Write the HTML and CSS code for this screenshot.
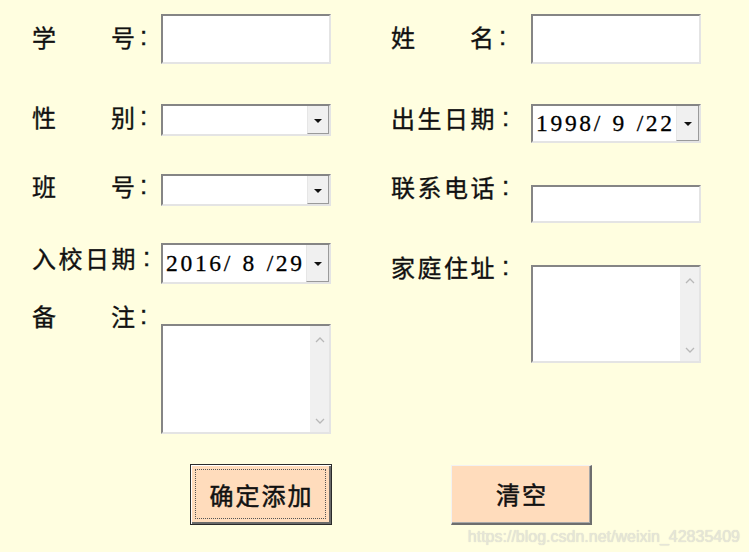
FILE: index.html
```html
<!DOCTYPE html>
<html lang="zh">
<head>
<meta charset="utf-8">
<link rel="stylesheet" href="styles.css">
</head>
<body>
<div class="page">
  <div class="form">
    <div class="col col-left">
      <div class="row r1">
        <div class="lbl"><span class="two"><span>学</span><span>号</span></span><span class="colon">:</span></div>
        <div class="field text h50"></div>
      </div>
      <div class="row r2">
        <div class="lbl"><span class="two"><span>性</span><span>别</span></span><span class="colon">:</span></div>
        <div class="field select h32"><span class="drop"><i class="tri"></i></span></div>
      </div>
      <div class="row r3">
        <div class="lbl"><span class="two"><span>班</span><span>号</span></span><span class="colon">:</span></div>
        <div class="field select h32"><span class="drop"><i class="tri"></i></span></div>
      </div>
      <div class="row r4">
        <div class="lbl"><span class="four">入校日期</span><span class="colon">:</span></div>
        <div class="field select date h41"><span class="val">2016/ 8 /29</span><span class="drop"><i class="tri"></i></span></div>
      </div>
      <div class="row r5">
        <div class="lbl"><span class="two"><span>备</span><span>注</span></span><span class="colon">:</span></div>
        <div class="field area h110">
          <span class="sb">
            <svg width="10" height="6" viewBox="0 0 10 6"><polyline points="1,5 5,1 9,5" fill="none" stroke="#b8b8b8" stroke-width="1.3"/></svg>
            <svg width="10" height="6" viewBox="0 0 10 6"><polyline points="1,1 5,5 9,1" fill="none" stroke="#b8b8b8" stroke-width="1.3"/></svg>
          </span>
        </div>
      </div>
    </div>
    <div class="col col-right">
      <div class="row q1">
        <div class="lbl"><span class="two"><span>姓</span><span>名</span></span><span class="colon">:</span></div>
        <div class="field text h50"></div>
      </div>
      <div class="row q2">
        <div class="lbl"><span class="four">出生日期</span><span class="colon">:</span></div>
        <div class="field select date h39"><span class="val">1998/ 9 /22</span><span class="drop"><i class="tri"></i></span></div>
      </div>
      <div class="row q3">
        <div class="lbl"><span class="four">联系电话</span><span class="colon">:</span></div>
        <div class="field text h38"></div>
      </div>
      <div class="row q4">
        <div class="lbl"><span class="four">家庭住址</span><span class="colon">:</span></div>
        <div class="field area h98">
          <span class="sb">
            <svg width="10" height="6" viewBox="0 0 10 6"><polyline points="1,5 5,1 9,5" fill="none" stroke="#b8b8b8" stroke-width="1.3"/></svg>
            <svg width="10" height="6" viewBox="0 0 10 6"><polyline points="1,1 5,5 9,1" fill="none" stroke="#b8b8b8" stroke-width="1.3"/></svg>
          </span>
        </div>
      </div>
    </div>
  </div>
  <div class="actions">
    <button class="btn btn-default"><span class="focus">确定添加</span></button>
    <button class="btn btn-plain"><span class="txt">清空</span></button>
  </div>
  <div class="watermark">https://blog.csdn.net/weixin_42835409</div>
</div>
</body>
</html>
```
FILE: styles.css
```css
html, body {
  margin: 0;
  padding: 0;
  background: #fffee0;
}
.page {
  position: relative;
  width: 749px;
  height: 552px;
  box-sizing: border-box;
  padding: 14px 0 0 32px;
  font-family: "Noto Sans CJK SC", "Noto Sans", sans-serif;
  color: #111;
}
.form {
  display: flex;
  gap: 60px;
}
.col {
  display: flex;
  flex-direction: column;
}
.row {
  display: flex;
  align-items: flex-start;
}
.col-left .lbl { width: 129px; }
.col-right .lbl { width: 140px; }
.lbl {
  display: flex;
  align-items: center;
  height: 24px;
  font-size: 24px;
  line-height: 24px;
  flex-shrink: 0;
  -webkit-text-stroke: 0.35px #111;
}
.two {
  display: flex;
  justify-content: space-between;
  width: 103px;
}
.four {
  letter-spacing: 2.5px;
  width: 106px;
}
.colon {
  margin-left: 5px;
  font-family: "Liberation Sans", sans-serif;
  font-size: 26px;
  -webkit-text-stroke: 0.4px #111;
  position: relative;
  top: -1px;
}

.field {
  box-sizing: border-box;
  width: 170px;
  background: #fff;
  border-top: 2px solid #858585;
  border-left: 2px solid #858585;
  border-right: 2px solid #e4e4e4;
  border-bottom: 2px solid #e4e4e4;
  position: relative;
  display: flex;
}
.h50 { height: 50px; }
.h32 { height: 32px; }
.h41 { height: 41px; }
.h39 { height: 39px; }
.h38 { height: 38px; }
.h110 { height: 110px; }
.h98 { height: 98px; }

.select { justify-content: flex-end; align-items: stretch; }
.select .drop {
  width: 20px;
  background: #f0f0f0;
  border-left: 1px solid #e6e6e6;
  border-right: 1px solid #9a9a9a;
  border-bottom: 1px solid #9a9a9a;
  display: flex;
  align-items: center;
  justify-content: center;
}
.tri {
  display: block;
  width: 0;
  height: 0;
  border-left: 4px solid transparent;
  border-right: 4px solid transparent;
  border-top: 4px solid #111;
  margin-top: 2px;
}
.date { justify-content: space-between; }
.date .drop { width: 21px; }
.val {
  font-family: "Liberation Serif", serif;
  font-size: 23.5px;
  letter-spacing: 2.7px;
  word-spacing: 1px;
  white-space: pre;
  color: #000;
  -webkit-text-stroke: 0.3px #000;
  align-self: center;
  padding-left: 3px;
}

.area { justify-content: flex-end; }
.sb {
  width: 19px;
  background: #f0f0f0;
  display: flex;
  flex-direction: column;
  justify-content: space-between;
  align-items: center;
  padding: 11px 0 8px;
}
.sb svg { display: block; }

.r1 .lbl { margin-top: 11px; }
.r2 { margin-top: 40px; }
.r2 .lbl { margin-top: 1px; }
.r3 { margin-top: 38px; }
.r4 { margin-top: 37px; }
.r4 .lbl { margin-top: 3px; }
.r5 { margin-top: 20px; }
.r5 .field { margin-top: 20px; }

.q1 .lbl { margin-top: 11px; }
.q2 { margin-top: 40px; }
.q2 .lbl { margin-top: 2px; }
.q3 { margin-top: 32px; }
.q3 .field { margin-top: 10px; }
.q4 { margin-top: 32px; }
.q4 .field { margin-top: 10px; }

.actions {
  display: flex;
  align-items: flex-start;
  gap: 119px;
  margin-top: 30px;
  padding-left: 158px;
}
.btn {
  box-sizing: border-box;
  background: #ffdcbc;
  font-family: "Noto Sans CJK SC", "Noto Sans", sans-serif;
  font-size: 24px;
  color: #111;
  -webkit-text-stroke: 0.5px #111;
  margin: 0;
  display: flex;
  align-items: stretch;
  justify-content: stretch;
  cursor: default;
}
.btn-default {
  width: 142px;
  height: 61px;
  border: 1px solid #2a2a2a;
  box-shadow: inset 1px 1px 0 #ffffff, inset -2px -2px 0 #6a6a6a;
  padding: 4px 5px 5px 4px;
}
.focus {
  flex: 1;
  border: 1px dotted #555;
  display: flex;
  align-items: center;
  justify-content: center;
  letter-spacing: 2px;
  padding-left: 2px;
}
.btn-plain {
  width: 141px;
  height: 60px;
  margin-top: 1px;
  border-top: 1px solid #f2f2f2;
  border-left: 1px solid #f2f2f2;
  border-right: 2px solid #6e6e6e;
  border-bottom: 2px solid #6e6e6e;
  box-shadow: inset -1px -1px 0 #a8a8a8;
  padding: 0;
  align-items: center;
  justify-content: center;
}
.txt {
  letter-spacing: 2px;
  padding-left: 2px;
  padding-bottom: 2px;
}
.watermark {
  position: absolute;
  right: 9px;
  bottom: 6px;
  font-family: "Liberation Sans", sans-serif;
  font-size: 16px;
  color: #e6e6d8;
  text-shadow: 0 0 1px #cfcfc0;
}
```
